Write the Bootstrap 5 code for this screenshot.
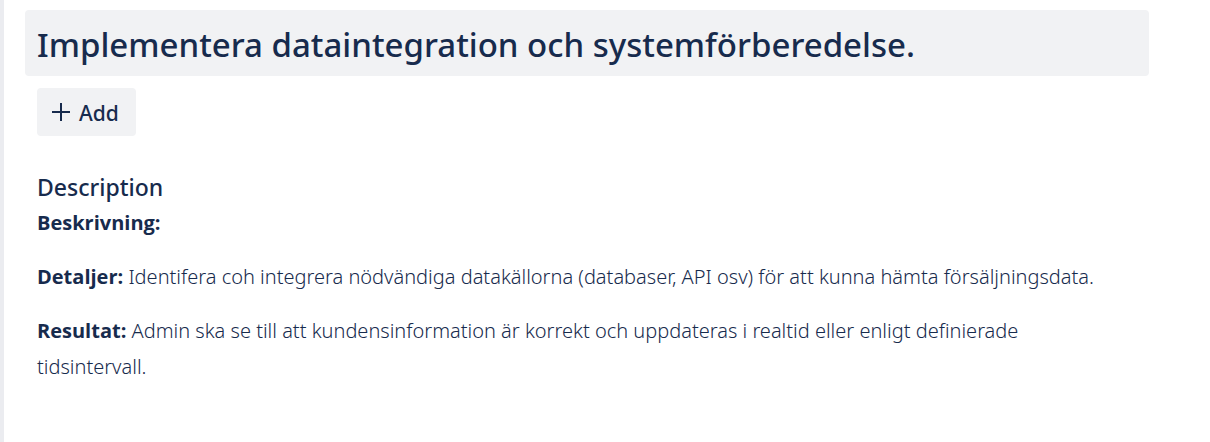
<!DOCTYPE html>
<html lang="sv">
<head>
<meta charset="utf-8">
<meta name="viewport" content="width=device-width, initial-scale=1">
<title>Implementera dataintegration</title>
<link href="https://cdn.jsdelivr.net/npm/bootstrap@5.3.0/dist/css/bootstrap.min.css" rel="stylesheet">
<style>
body { font-family: "Noto Sans", "Open Sans", sans-serif; color: #172b4d; font-size: 20px; line-height: 36px; font-weight: 300; }
.issue { border-left: 4px solid #ebecf0; padding: 10px 61px 0 21px; }
.issue-title { background: #f1f2f4; border-radius: 4px; padding: 14px 12px 10px; font-size: 33px; line-height: 42px; font-weight: 500; }
.issue-body { padding: 12px 12px 0; }
.add-btn { background: #f1f2f4; color: #172b4d; border: 0; border-radius: 4px; padding: 7px 17px 5px 15px; font-size: 21px; line-height: 36px; font-weight: 500; }
.section-title { font-size: 23px; line-height: 36px; font-weight: 500; }
.issue-text { margin-top: 33px; padding-right: 24px; }
.issue-text p { margin-bottom: 18px; }
.issue-text strong { font-family: "Open Sans", sans-serif; font-weight: 700; }
</style>
</head>
<body>
<main class="issue min-vh-100">
  <h1 class="issue-title mb-0">Implementera dataintegration och systemförberedelse.</h1>
  <div class="issue-body">
    <button type="button" class="btn add-btn d-flex align-items-center gap-2">
      <svg width="19" height="20" viewBox="0 0 19 20" fill="none" stroke="currentColor" stroke-width="2" aria-hidden="true"><path d="M9 0v18M0 9h18"/></svg>
      Add
    </button>
    <section class="issue-text">
      <h2 class="section-title mb-0">Description</h2>
      <p><strong>Beskrivning:</strong></p>
      <p><strong>Detaljer:</strong> Identifera coh integrera nödvändiga datakällorna (databaser, API osv) för att kunna hämta försäljningsdata.</p>
      <p><strong>Resultat:</strong> Admin ska se till att kundensinformation är korrekt och uppdateras i realtid eller enligt definierade tidsintervall.</p>
    </section>
  </div>
</main>
<script src="https://cdn.jsdelivr.net/npm/bootstrap@5.3.0/dist/js/bootstrap.bundle.min.js"></script>
</body>
</html>
